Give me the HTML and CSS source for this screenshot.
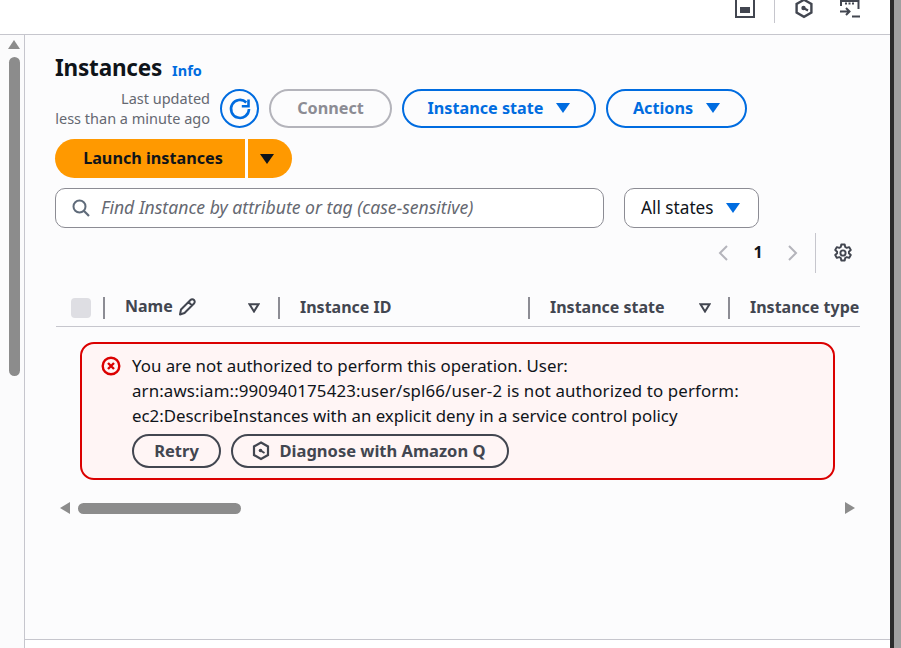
FILE: index.html
```html
<!DOCTYPE html>
<html lang="en">
<head>
<meta charset="utf-8">
<title>Instances</title>
<link rel="stylesheet" href="styles.css">
</head>
<body>
<div class="window">
  <div class="app">
    <header class="topbar">
      <svg class="top-icon first" width="20" height="20" viewBox="0 0 20 20"><rect x="1" y="-2" width="18" height="19" fill="none" stroke="#424650" stroke-width="2"/><rect x="5" y="7" width="10" height="6" fill="#424650"/></svg>
      <span class="top-sep"></span>
      <svg class="top-icon q" width="20" height="20" viewBox="0 0 20 20"><path d="M10 .8 17.4 5v8.6L10 17.8 2.6 13.6V5z" fill="none" stroke="#424650" stroke-width="2.4"/><circle cx="9.500" cy="9" r="2.200" fill="#424650"/><path d="M9.500 9 14 11.500" stroke="#424650" stroke-width="2.200" fill="none"/></svg>
      <svg class="top-icon term" width="20" height="18" viewBox="0 0 20 18"><path d="M1 6V1h17.500v8" fill="none" stroke="#424650" stroke-width="2"/><path d="M5 3.500h2M8.500 3.500h2M12 3.500h2" stroke="#424650" stroke-width="2"/><path d="M0 11.500h9M6 8l3.500 3.500L6 15M12 16.500h8" fill="none" stroke="#424650" stroke-width="2"/></svg>
    </header>
    <div class="body">
      <aside class="rail">
        <span class="arrow-up"></span>
        <span class="rail-thumb"></span>
      </aside>
      <main class="main">
        <div class="content">
          <div class="title-row">
            <h1>Instances</h1>
            <a class="info">Info</a>
          </div>
          <div class="actions">
            <div class="updated">Last updated<br>less than a minute ago</div>
            <button class="refresh" aria-label="Refresh">
              <svg width="24" height="24" viewBox="0 0 24 24"><path d="M18.300 5.500A9 9 0 1 0 21 12" fill="none" stroke="#006ce0" stroke-width="2.600"/><path d="M20.500 2.500V9.200H13.800" fill="none" stroke="#006ce0" stroke-width="2.600"/></svg>
            </button>
            <button class="btn disabled">Connect</button>
            <button class="btn primary-line wide">Instance state<span class="caret"></span></button>
            <button class="btn primary-line narrow">Actions<span class="caret"></span></button>
          </div>
          <div class="launch">
            <button class="launch-main">Launch instances</button>
            <button class="launch-caret" aria-label="More"><span class="caret dark"></span></button>
          </div>
          <div class="filters">
            <div class="search">
              <svg width="18" height="18" viewBox="0 0 18 18"><circle cx="7.500" cy="7.500" r="6" fill="none" stroke="#5f6b7a" stroke-width="2"/><path d="M11.800 11.800 17 17" stroke="#5f6b7a" stroke-width="2.200"/></svg>
              <span>Find Instance by attribute or tag (case-sensitive)</span>
            </div>
            <div class="states">All states<span class="caret"></span></div>
          </div>
          <div class="pager">
            <svg width="12" height="18" viewBox="0 0 12 18"><path d="M10 2 3 9l7 7" fill="none" stroke="#b4b4bb" stroke-width="2"/></svg>
            <span class="page-no">1</span>
            <svg width="12" height="18" viewBox="0 0 12 18"><path d="M2 2l7 7-7 7" fill="none" stroke="#b4b4bb" stroke-width="2"/></svg>
            <span class="pager-sep"></span>
            <svg class="gear" width="20" height="20" viewBox="0 0 20 20"><path d="M8.300 1.500h3.400l.5 2.500 1.500.9 2.400-.8 1.700 2.900-1.900 1.700v1.600l1.900 1.700-1.700 2.900-2.400-.8-1.500.9-.5 2.500H8.300l-.5-2.500-1.500-.9-2.400.8-1.700-2.900 1.900-1.700V8.700L2.200 7l1.700-2.900 2.400.8 1.500-.9z" fill="none" stroke="#424650" stroke-width="1.900" stroke-linejoin="round"/><circle cx="10" cy="10" r="2.600" fill="none" stroke="#424650" stroke-width="1.900"/></svg>
          </div>
          <div class="thead">
            <div class="cell check"><span class="checkbox"></span></div>
            <div class="cell name">
              <span class="name-text">Name</span>
              <svg class="pencil" width="18" height="18" viewBox="0 0 18 18"><path d="M2 16.500l1-5L12.500 2a2 2 0 0 1 3.500 3.500L6.500 15z M10.500 4l3.500 3.500" fill="none" stroke="#424650" stroke-width="2" stroke-linejoin="round"/></svg>
              <svg class="sort" width="12" height="10" viewBox="0 0 12 10"><path d="M1.500 1.200h9L6 8.500z" fill="none" stroke="#424650" stroke-width="2"/></svg>
            </div>
            <div class="cell id">Instance ID</div>
            <div class="cell state">Instance state
              <svg class="sort" width="12" height="10" viewBox="0 0 12 10"><path d="M1.500 1.200h9L6 8.500z" fill="none" stroke="#424650" stroke-width="2"/></svg>
            </div>
            <div class="cell type">Instance type</div>
          </div>
          <div class="alert">
            <svg class="alert-icon" width="20" height="20" viewBox="0 0 20 20"><circle cx="10" cy="10" r="8.300" fill="none" stroke="#db0000" stroke-width="2.400"/><path d="M7 7l6 6M13 7l-6 6" stroke="#db0000" stroke-width="2.400"/></svg>
            <div class="alert-body">
              <p>You are not authorized to perform this operation. User:<br><span class="arn">arn:aws:iam::990940175423:user/spl66/user-2 is not authorized to perform:</span><br>ec2:DescribeInstances with an explicit deny in a service control policy</p>
              <div class="alert-actions">
                <button class="ghost retry">Retry</button>
                <button class="ghost diagnose">
                  <svg width="20" height="20" viewBox="0 0 20 20"><path d="M10 1.500 17 5.500v8.500l-7 4-7-4V5.500z" fill="none" stroke="#424650" stroke-width="2.200"/><circle cx="9.500" cy="9.500" r="1.800" fill="#424650"/><path d="M9.500 9.500 13.500 12" stroke="#424650" stroke-width="2"/></svg>
                  Diagnose with Amazon Q
                </button>
              </div>
            </div>
          </div>
          <div class="hscroll">
            <span class="arrow-left"></span>
            <div class="htrack"><span class="hthumb"></span></div>
            <span class="arrow-right"></span>
          </div>
        </div>
        <footer class="foot"></footer>
      </main>
    </div>
  </div>
  <div class="edge"></div>
  <div class="outer"></div>
</div>
</body>
</html>
```

FILE: styles.css
```css
* { box-sizing: border-box; }
html, body { margin: 0; height: 100%; overflow: hidden; }
body { font-family: "Noto Sans", "Open Sans", sans-serif; color: #0f141a; background: #fff; }
button { font-family: inherit; background: none; padding: 0 0 2px; cursor: pointer; }
svg { display: block; flex: none; }

.window { display: flex; width: 901px; height: 648px; }
.app { width: 890px; display: flex; flex-direction: column; }
.edge { width: 4px; background: #2b2b2b; }
.outer { width: 7px; background: #a0a0a0; }

.topbar { height: 35px; background: #fff; border-bottom: 1px solid #c6c6cd; display: flex; align-items: flex-start; flex: none; overflow: hidden; padding-left: 735px; }
.top-sep { width: 1px; height: 23px; background: #c6c6cd; margin-left: 19px; }
.top-icon.q { margin-left: 19px; margin-top: -1px; }
.top-icon.term { margin-left: 26px; }

.body { flex: 1; display: flex; min-height: 0; }
.rail { width: 25px; background: #fbfbfc; border-right: 1px solid #c6c6cd; padding: 5px 0 0 8px; display: flex; flex-direction: column; align-items: flex-start; }
.arrow-up { width: 0; height: 0; border-left: 6.500px solid transparent; border-right: 6.500px solid transparent; border-bottom: 9px solid #8c8c8c; }
.rail-thumb { width: 11px; height: 319px; margin: 8px 0 0 1px; background: #8c8c8c; border-radius: 6px; }

.main { flex: 1; background: #fcfcfd; display: flex; flex-direction: column; min-width: 0; }
.content { flex: 1; padding: 16px 30px 0; }
.foot { height: 9px; border-top: 1px solid #c6c6cd; background: #fff; }

.title-row { display: flex; align-items: baseline; height: 38px; }
h1 { margin: 0; font-size: 22.500px; line-height: 34px; font-weight: 700; letter-spacing: -0.2px; }
.info { margin-left: 10px; color: #006ce0; font-size: 14.500px; font-weight: 700; }

.actions { display: flex; align-items: center; height: 39px; }
.updated { width: 155px; text-align: right; font-size: 14.500px; line-height: 20px; color: #656871; white-space: nowrap; margin-top: -2px; }
.refresh { width: 39px; height: 39px; margin-left: 10px; padding: 0; border: 2px solid #006ce0; border-radius: 50%; display: flex; align-items: center; justify-content: center; }
.btn { height: 39px; border-radius: 20px; font-size: 16.200px; font-weight: 700; margin-left: 10px; border: 2px solid; display: flex; align-items: center; justify-content: center; }
.btn.disabled { width: 123px; border-color: #b4b4bb; color: #8c8c94; }
.primary-line { color: #006ce0; border-color: #006ce0; }
.wide { width: 194px; gap: 13px; }
.narrow { width: 141px; gap: 13px; }
.caret { display: inline-block; width: 0; height: 0; border-left: 7px solid transparent; border-right: 7px solid transparent; border-top: 10px solid #006ce0; }
.caret.dark { border-top-color: #0f141a; }

.launch { display: flex; margin-top: 11px; height: 39px; gap: 3px; }
.launch-main { width: 190px; border: 0; background: #ff9900; border-radius: 20px 0 0 20px; font-size: 16.200px; font-weight: 700; color: #0f141a; padding: 0 0 2px 6px; }
.launch-caret { width: 44px; border: 0; background: #ff9900; border-radius: 0 20px 20px 0; display: flex; align-items: center; justify-content: center; padding: 0 6px 0 0; }

.filters { display: flex; margin-top: 10px; height: 40px; gap: 20px; }
.search { width: 549px; border: 1px solid #8c8c94; border-radius: 10px; background: #fff; display: flex; align-items: center; gap: 11px; padding: 0 0 0 16px; font-style: italic; font-size: 17.600px; color: #656871; white-space: nowrap; }
.search span { margin-top: -2px; }
.states { width: 135px; border: 1px solid #8c8c94; border-radius: 10px; background: #fff; display: flex; align-items: center; gap: 12px; padding: 0 0 1px 16px; font-size: 17.200px; color: #0f141a; white-space: nowrap; }

.pager { display: flex; align-items: center; height: 40px; margin-top: 5px; padding-left: 662px; }
.page-no { width: 58px; text-align: center; font-size: 16px; font-weight: 700; margin-top: -2px; }
.pager-sep { width: 1px; height: 40px; background: #c6c6cd; margin-left: 16px; }
.gear { margin-left: 17px; }

.thead { display: grid; grid-template-columns: 49px 175px 250px 200px 1fr; width: 804px; height: 37px; margin: 17px 0 0 1px; border-bottom: 1px solid #c6c6cd; align-items: center; font-size: 16px; font-weight: 700; color: #424650; overflow: hidden; white-space: nowrap; }
.cell { display: flex; align-items: center; height: 22px; border-right: 2px solid #8c8c94; padding-bottom: 3px; }
.cell.check { padding: 0 0 0 15px; height: 22px; }
.checkbox { width: 20px; height: 20px; border-radius: 4px; background: #dedee3; }
.cell.name { padding-left: 20px; }
.name-text { margin-right: 5px; margin-top: -2px; }
.pencil { margin-top: 1px; }
.cell.name .sort { margin: 2px 18px 0 auto; }
.cell.id, .cell.state, .cell.type { padding-left: 20px; }
.cell.state { justify-content: space-between; padding-right: 17px; }
.cell.state .sort { margin-top: 2px; }
.cell.type { border-right: 0; }

.alert { display: flex; margin: 15px 0 0 25px; width: 755px; height: 138px; border: 2px solid #db0000; border-radius: 14px; background: #fff5f5; padding: 9px 19px; gap: 11px; }
.alert-icon { margin-top: 3px; }
.alert-body p { margin: 0; font-size: 16.850px; line-height: 25px; color: #0f141a; white-space: nowrap; }
.arn { letter-spacing: 0.125px; }
.alert-actions { display: flex; gap: 10px; margin-top: 6px; }
.ghost { height: 34px; border: 2px solid #424650; border-radius: 17px; font-size: 16.500px; font-weight: 700; color: #424650; display: flex; align-items: center; justify-content: center; gap: 9px; white-space: nowrap; }
.retry { width: 89px; }
.diagnose { width: 278px; padding-right: 4px; }
.diagnose svg { margin-top: 2px; }

.hscroll { display: flex; align-items: center; height: 12px; margin-top: 22px; }
.arrow-left { margin-left: 5px; width: 0; height: 0; border-top: 6px solid transparent; border-bottom: 6px solid transparent; border-right: 10px solid #8c8c8c; }
.arrow-right { margin-left: 0; width: 0; height: 0; border-top: 6px solid transparent; border-bottom: 6px solid transparent; border-left: 10px solid #8c8c8c; }
.htrack { width: 767px; margin-left: 8px; }
.hthumb { display: block; width: 163px; height: 11px; border-radius: 6px; background: #8c8c8c; }
```
